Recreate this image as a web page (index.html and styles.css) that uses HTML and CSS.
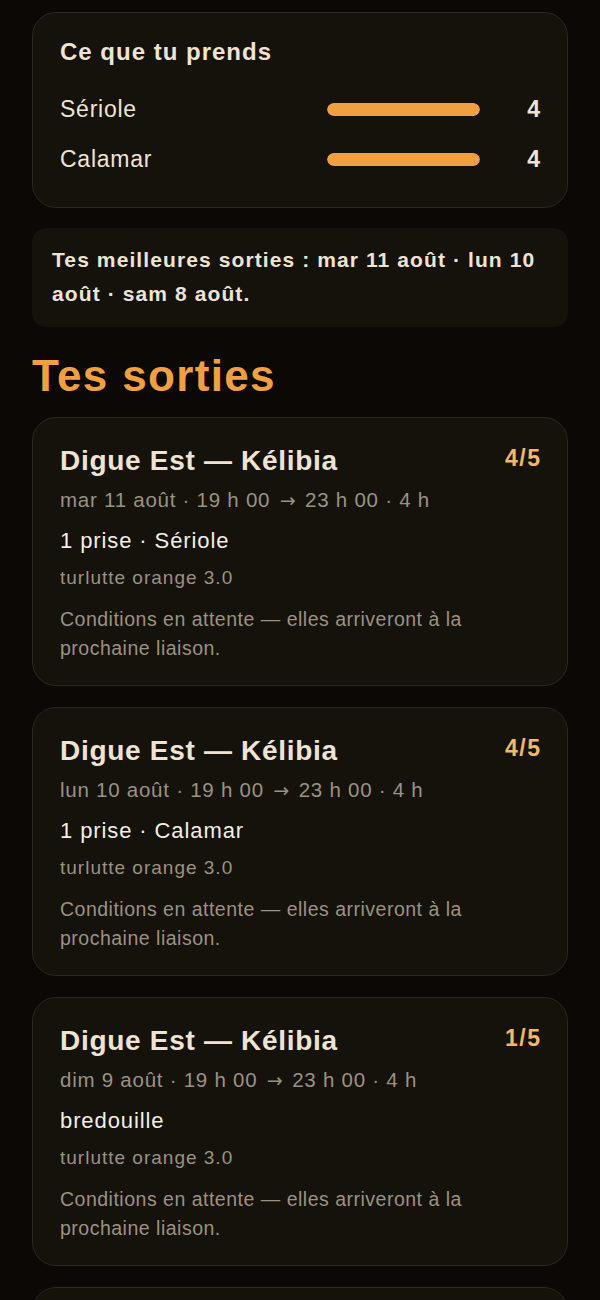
FILE: index.html
```html
<!DOCTYPE html>
<html lang="fr">
<head>
<meta charset="utf-8">
<title>Tes sorties</title>
<link rel="stylesheet" href="styles.css">
</head>
<body>
<main class="page">
  <section class="card species">
    <h2 class="species-title">Ce que tu prends</h2>
    <div class="species-row">
      <span class="species-name">Sériole</span>
      <span class="bar"><span class="bar-fill" style="width:100%"></span></span>
      <span class="species-count">4</span>
    </div>
    <div class="species-row">
      <span class="species-name">Calamar</span>
      <span class="bar"><span class="bar-fill" style="width:100%"></span></span>
      <span class="species-count">4</span>
    </div>
  </section>

  <section class="best">
    <p>Tes meilleures sorties : mar 11 août · lun 10 août · sam 8 août.</p>
  </section>

  <h1 class="section-title">Tes sorties</h1>

  <article class="card session">
    <header class="session-head">
      <h3 class="session-title">Digue Est — Kélibia</h3>
      <span class="session-score">4/5</span>
    </header>
    <p class="session-time">mar 11 août · 19 h 00 <span class="arrow">→</span> 23 h 00 · 4 h</p>
    <p class="session-catch">1 prise · Sériole</p>
    <p class="session-lure">turlutte orange 3.0</p>
    <p class="session-cond">Conditions en attente — elles arriveront à la prochaine liaison.</p>
  </article>

  <article class="card session">
    <header class="session-head">
      <h3 class="session-title">Digue Est — Kélibia</h3>
      <span class="session-score">4/5</span>
    </header>
    <p class="session-time">lun 10 août · 19 h 00 <span class="arrow">→</span> 23 h 00 · 4 h</p>
    <p class="session-catch">1 prise · Calamar</p>
    <p class="session-lure">turlutte orange 3.0</p>
    <p class="session-cond">Conditions en attente — elles arriveront à la prochaine liaison.</p>
  </article>

  <article class="card session">
    <header class="session-head">
      <h3 class="session-title">Digue Est — Kélibia</h3>
      <span class="session-score">1/5</span>
    </header>
    <p class="session-time">dim 9 août · 19 h 00 <span class="arrow">→</span> 23 h 00 · 4 h</p>
    <p class="session-catch">bredouille</p>
    <p class="session-lure">turlutte orange 3.0</p>
    <p class="session-cond">Conditions en attente — elles arriveront à la prochaine liaison.</p>
  </article>

  <article class="card session">
    <header class="session-head">
      <h3 class="session-title">Digue Est — Kélibia</h3>
      <span class="session-score">4/5</span>
    </header>
    <p class="session-time">sam 8 août · 19 h 00 <span class="arrow">→</span> 23 h 00 · 4 h</p>
    <p class="session-catch">1 prise · Sériole</p>
    <p class="session-lure">turlutte orange 3.0</p>
    <p class="session-cond">Conditions en attente — elles arriveront à la prochaine liaison.</p>
  </article>
</main>
</body>
</html>
```

FILE: styles.css
```css
* { box-sizing: border-box; }
html, body {
  margin: 0;
  padding: 0;
  background: #0b0806;
}
body {
  font-family: "Liberation Sans", Arial, sans-serif;
  color: #efe4d3;
}
h1, h2, h3, p { margin: 0; }

.page {
  padding: 12px 32px 0 32px;
  display: flex;
  flex-direction: column;
}

.card {
  background: #15110b;
  border: 1px solid #2c271d;
  border-radius: 24px;
}

.species {
  padding: 24px 27px 33px 27px;
}
.species-title {
  font-size: 24px;
  line-height: 30px;
  font-weight: 700;
  letter-spacing: 1px;
  color: #efe4d3;
}
.species-row {
  display: grid;
  grid-template-columns: 1fr 153px 60px;
  align-items: center;
  height: 30px;
  margin-top: 20px;
}
.species-row:first-of-type { margin-top: 27px; }
.species-name {
  font-size: 23px;
  letter-spacing: 0.75px;
}
.bar {
  display: block;
  height: 13px;
  border-radius: 7px;
  background: #2a241a;
  overflow: hidden;
}
.bar-fill {
  display: block;
  height: 100%;
  background: #f0a040;
  border-radius: 7px;
}
.species-count {
  text-align: right;
  font-size: 23px;
  font-weight: 700;
}

.best {
  margin-top: 20px;
  background: #15110b;
  border-radius: 14px;
  padding: 15px 20px 16px 20px;
}
.best p {
  font-size: 21px;
  line-height: 34px;
  font-weight: 700;
  letter-spacing: 1.1px;
}

.section-title {
  margin-top: 24px;
  font-size: 44px;
  line-height: 50px;
  font-weight: 700;
  color: #f0a040;
  letter-spacing: 1.35px;
}

.session {
  margin-top: 16px;
  padding: 26px 27px 22px 27px;
}
.session + .session { margin-top: 21px; }

.session-head {
  display: flex;
  justify-content: space-between;
  align-items: flex-start;
}
.session-title {
  font-size: 28px;
  line-height: 34px;
  font-weight: 700;
  letter-spacing: 0.7px;
  color: #efe4d3;
}
.session-score {
  font-size: 23px;
  line-height: 28px;
  font-weight: 700;
  letter-spacing: 1.5px;
  margin-right: -1.5px;
  color: #f5b760;
}
.session-time {
  margin-top: 8px;
  font-size: 20.5px;
  line-height: 28px;
  letter-spacing: 0.75px;
  color: #9c9282;
}
.arrow {
  font-family: "DejaVu Sans", sans-serif;
  font-size: 19px;
  letter-spacing: 0;
  margin: 0 3px;
}
.session-catch {
  margin-top: 12px;
  font-size: 22px;
  line-height: 29px;
  letter-spacing: 0.9px;
  color: #f4eee4;
}
.session-lure {
  margin-top: 10px;
  font-size: 19px;
  line-height: 26px;
  letter-spacing: 1px;
  color: #9c9282;
}
.session-cond {
  margin-top: 14px;
  font-size: 19.5px;
  line-height: 29px;
  letter-spacing: 0.5px;
  color: #9c9282;
}
```
